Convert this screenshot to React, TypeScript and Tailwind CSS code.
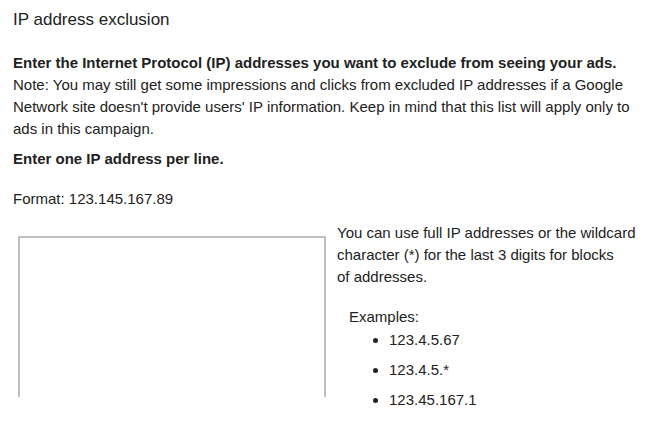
const App = () => {
  return (
    <div className="min-h-screen bg-white text-[#222] font-['Liberation_Sans',Arial,sans-serif] text-[15px] leading-[22px] pl-[13px] pt-[9px] whitespace-nowrap">
      <h1 className="text-[17px] leading-[22px] font-normal">IP address exclusion</h1>

      <p className="mt-[21px] font-bold">
        Enter the Internet Protocol (IP) addresses you want to exclude from seeing your ads.
      </p>
      <p>
        Note: You may still get some impressions and clicks from excluded IP addresses if a Google
        <br />
        Network site doesn't provide users' IP information. Keep in mind that this list will apply only to
        <br />
        ads in this campaign.
      </p>

      <p className="mt-[8px] font-bold">Enter one IP address per line.</p>
      <p className="mt-[18px]">Format: 123.145.167.89</p>

      <div className="flex mt-[12px]">
        <div className="ml-[5px] mt-[14px] w-[308px] h-[161px] border-[2px] border-b-0 border-[#c0c0c0]" />
        <div className="ml-[11px]">
          <p>
            You can use full IP addresses or the wildcard
            <br />
            character (*) for the last 3 digits for blocks
            <br />
            of addresses.
          </p>
          <p className="mt-[18px] ml-[12px]">Examples:</p>
          <ul className="list-disc ml-[52px]">
            <li className="h-[30px] leading-[24px]">123.4.5.67</li>
            <li className="h-[30px] leading-[24px]">123.4.5.*</li>
            <li className="h-[30px] leading-[24px]">123.45.167.1</li>
          </ul>
        </div>
      </div>
    </div>
  )
}

export default App
